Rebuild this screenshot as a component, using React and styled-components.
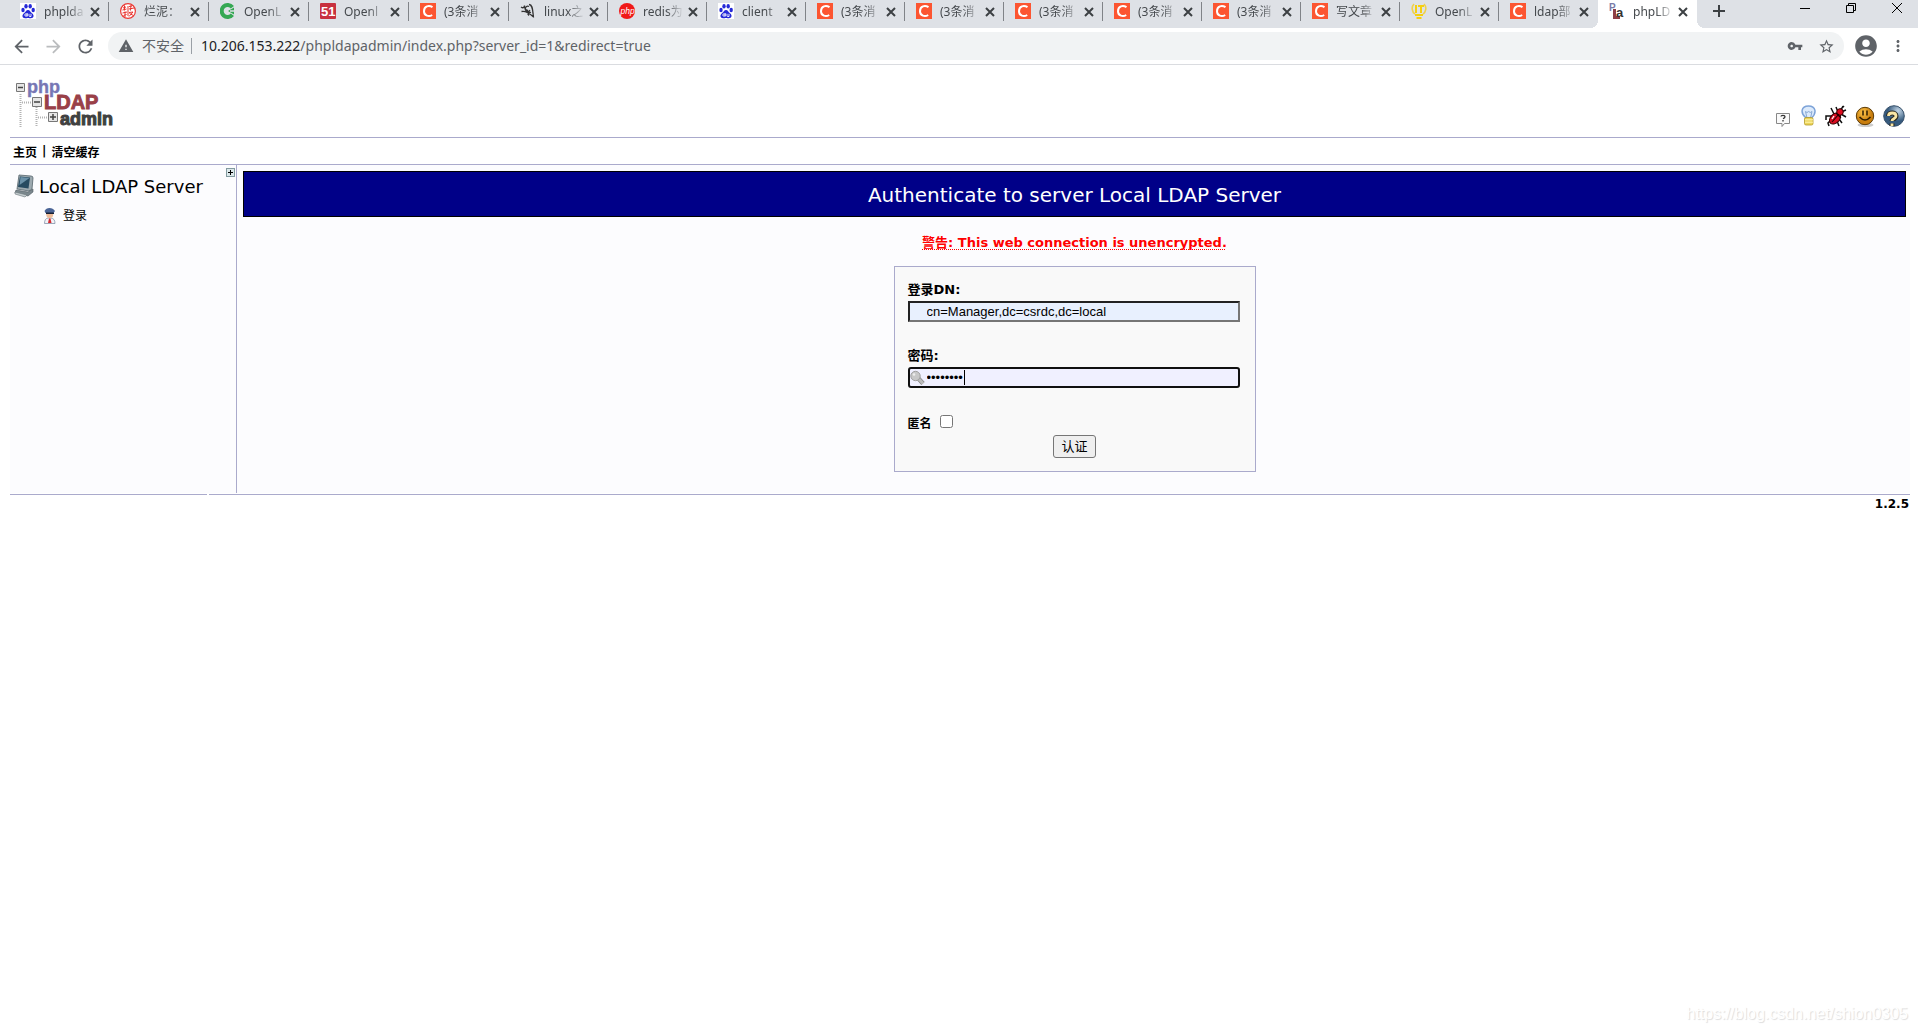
import React from "react";
import styled, { createGlobalStyle } from "styled-components";
import { MdArrowBack, MdArrowForward, MdRefresh, MdWarning, MdVpnKey, MdStarBorder, MdAccountCircle, MdMoreVert } from "react-icons/md";

const line = "#aaaacc";
const pageFont = '"DejaVu Sans", "Noto Sans CJK SC", sans-serif';
const chromeFont = '"Noto Sans", "Noto Sans CJK SC", sans-serif';

const Global = createGlobalStyle`
  *, *::before, *::after { box-sizing: border-box; }
  body { margin: 0; background: #fff; }
  button { font: inherit; color: inherit; padding: 0; border: 0; background: none; }
  svg { display: block; flex: none; }
`;

const Screen = styled.div`
  display: flex;
  flex-direction: column;
  min-height: 100vh;
  font-family: ${pageFont};
  font-size: 12px;
  color: #000;
`;

/* ---------- browser frame ---------- */
const TabStrip = styled.div`
  display: flex;
  height: 28px;
  padding-left: 9px;
  background: #dee1e6;
  font: 12px/18px ${chromeFont};
  color: #45494d;
  overflow: hidden;
`;
const Tabs = styled.div`
  display: flex;
  flex: 0 1 1688px;
  min-width: 0;
`;
const Tab = styled.div`
  display: flex;
  align-items: flex-start;
  flex: 0 1 ${(p) => (p.$wide ? 100 : 99)}px;
  min-width: 0;
  height: 28px;
  padding: 3px 9px 0 11px;
  background: ${(p) => (p.$active ? "#fff" : "none")};
  position: relative;
  &::after {
    content: "";
    position: absolute;
    right: 0;
    top: 2px;
    width: 1px;
    height: 19px;
    background: ${(p) => (p.$bare ? "transparent" : "#808388")};
  }
  ${(p) =>
    p.$active &&
    `&::before { content: ""; position: absolute; left: -8px; bottom: 0; width: 8px; height: 8px;
      background: radial-gradient(circle at 0 0, #dee1e6 8px, #fff 8px); }
     &::after { top: auto; bottom: 0; right: -8px; width: 8px; height: 8px;
      background: radial-gradient(circle at 100% 0, #dee1e6 8px, #fff 8px); }`}
`;
const TabTitle = styled.span`
  flex: 1 1 0;
  min-width: 0;
  margin-left: 8px;
  overflow: hidden;
  white-space: nowrap;
  mask-image: linear-gradient(to right, #000 60%, rgba(0, 0, 0, 0.1) 100%);
`;
const TabClose = styled.button`
  margin: 4px 0 0 6px;
`;
const NewTab = styled.button`
  margin: 0 0 6px 16px;
`;
const WindowButtons = styled.div`
  display: flex;
  gap: 36px;
  margin: 3px 16px 0 auto;
`;
const WindowButton = styled.button`
  width: 10px;
  height: 10px;
`;
const Toolbar = styled.div`
  display: flex;
  align-items: center;
  height: 37px;
  padding: 0 11px 0 11px;
  border-bottom: 1px solid #dadce0;
  color: #5f6368;
  font: 14px/20px ${chromeFont};
`;
const ToolButton = styled.button`
  margin-right: ${(p) => p.$after}px;
  color: ${(p) => (p.$faded ? "#babcbe" : "#5f6368")};
  font-size: ${(p) => p.$size || 21}px;
`;
const AddressBar = styled.div`
  display: flex;
  align-items: center;
  flex: 1;
  min-width: 0;
  height: 28px;
  margin-right: 9px;
  padding: 0 9px 0 10px;
  border-radius: 14px;
  background: #f1f3f4;
  font-size: 16px;
`;
const Insecure = styled.span`
  margin-left: 8px;
  padding-right: 7px;
  border-right: 1px solid #9aa0a6;
  font-size: 14px;
  line-height: 16px;
`;
const Url = styled.div`
  flex: 1;
  margin-left: 9px;
  font-size: 14px;
  white-space: nowrap;
  b { font-weight: 400; color: #202124; }
`;

/* ---------- application ---------- */
const Page = styled.div`
  padding: 0 8px 0 10px;
`;
const Header = styled.header`
  display: flex;
  justify-content: space-between;
  align-items: flex-end;
  height: 73px;
  padding: 0 5px 9px 4px;
  border-bottom: 1px solid ${line};
`;
const Tools = styled.nav`
  display: flex;
  align-items: flex-end;
  gap: 8px;
  a { display: block; }
`;
const Menu = styled.nav`
  display: flex;
  align-items: center;
  gap: 5px;
  height: 27px;
  padding-left: 3px;
  border-bottom: 1px solid ${line};
  font-weight: 700;
  a { color: inherit; text-decoration: none; }
`;
const Columns = styled.div`
  display: flex;
  min-height: 328px;
  background: #fcfcfe;
`;
const Sidebar = styled.aside`
  display: flex;
  align-items: flex-start;
  flex: none;
  width: 227px;
  padding: 3px 1px 0 4px;
  border-right: 1px solid ${line};
`;
const Tree = styled.div`
  flex: 1;
  padding-top: 5px;
`;
const ServerName = styled.div`
  display: flex;
  align-items: center;
  gap: 5px;
  height: 26px;
  font-size: 18px;
  white-space: nowrap;
`;
const LoginLink = styled.a`
  display: flex;
  align-items: center;
  gap: 6px;
  margin-top: 8px;
  padding-left: 29px;
  line-height: 18px;
  color: #000;
  text-decoration: none;
`;
const Expand = styled.button`
  width: 9px;
  height: 9px;
`;
const Main = styled.main`
  display: flex;
  flex-direction: column;
  align-items: center;
  flex: 1;
  min-width: 0;
  padding: 6px 4px 21px 6px;
`;
const Title = styled.h1`
  width: 100%;
  margin: 0;
  padding: 11px 10px 9px;
  border: 1px solid #000;
  background: #000088;
  color: #fff;
  font-size: 20px;
  font-weight: 400;
  line-height: 24px;
  text-align: center;
`;
const Warning = styled.strong`
  margin: 17px 0 15px;
  font-size: 13px;
  line-height: 17px;
  color: #f00;
  text-decoration: underline dotted 1px;
  text-underline-offset: 2px;
  text-decoration-skip-ink: none;
`;
const Form = styled.form`
  width: 362px;
  padding: 13px 15px 13px 13px;
  border: 1px solid ${line};
  background: #f9f9f9;
`;
const Label = styled.label`
  display: block;
  font-size: ${(p) => p.$size || 13}px;
  font-weight: 700;
  line-height: 20px;
`;
const Field = styled.div`
  position: relative;
  margin: 1px 0 24px;
`;
const Input = styled.input`
  display: block;
  width: 100%;
  height: 21px;
  padding: 0 0 0 17px;
  border: 2px solid;
  border-color: #222 #767676 #767676 #222;
  outline: 0;
  background: #e8f0fe;
  font: 13px "Liberation Sans", Arial, sans-serif;
  color: #000;
  ${(p) => p.$focused && "border-color: #101010; border-radius: 3px; background: #f0f0ff; caret-color: transparent;"}
`;
const KeyMark = styled.span`
  position: absolute;
  left: 2px;
  top: 3px;
`;
const Caret = styled.span`
  position: absolute;
  left: 56px;
  top: 3px;
  width: 1px;
  height: 15px;
  background: #000;
`;
const CheckRow = styled.div`
  display: flex;
  align-items: flex-end;
  gap: 8px;
  height: 22px;
  input { margin: 0 0 6px; width: 13px; height: 13px; }
`;
const Submit = styled.button`
  && {
    display: block;
    width: 43px;
    height: 23px;
    margin: 1px auto 0;
    border: 1px solid #767676;
    border-radius: 3px;
    background: #efefef;
    font: 13px/19px ${chromeFont};
  }
`;
const SubmitRow = styled.div`
  padding-left: 2px;
`;
const Footer = styled.footer`
  display: flex;
  gap: 2px;
  margin-top: 1px;
  font-weight: 700;
  line-height: 18px;
`;
const FooterCell = styled.div`
  flex: ${(p) => (p.$fixed ? "0 0 197px" : "1")};
  padding-right: 1px;
  border-top: 1px solid ${line};
  text-align: right;
`;
const Watermark = styled.div`
  margin: auto 10px 8px;
  text-align: right;
  font: 16px/20px "Liberation Sans", Arial, sans-serif;
  color: #fff;
  text-shadow: 1px 1px 1px #dcdcdc;
`;

/* ---------- drawings ---------- */
const Fav = ({ children }) => (
  <svg width="16" height="16" viewBox="0 0 16 16" aria-hidden="true">{children}</svg>
);
const sans = '"Liberation Sans", Arial, sans-serif';
const favicons = {
  baidu: (
    <Fav>
      <rect width="16" height="16" fill="#fff" />
      <g fill="#2529d8">
        <ellipse cx="3" cy="7" rx="1.7" ry="2.2" /><ellipse cx="6" cy="3.3" rx="1.7" ry="2.2" />
        <ellipse cx="10.2" cy="3.3" rx="1.7" ry="2.2" /><ellipse cx="13.2" cy="7" rx="1.7" ry="2.2" />
        <path d="M8 7c2 0 2.3 2 4 3.2 2.8 2 1.5 5-1 5-1.300 0-1.800-.3-3-.3s-1.700.3-3 .3c-2.500 0-3.700-3-1-5C5.700 9 6 7 8 7z" />
      </g>
      <g stroke="#fff" fill="none" strokeWidth=".9"><circle cx="6" cy="12" r="1.2" /><path d="M7.200 10v3.500M9 10.800v2q0 .7 1 .7h1v-2.700" /></g>
    </Fav>
  ),
  seal: (
    <Fav>
      <circle cx="8" cy="8" r="7.400" fill="#fff" stroke="#ea3a35" strokeWidth="1.200" />
      <g stroke="#e8322d" strokeWidth="1" fill="none"><path d="M3 5l3-1M4.500 2.500v5M2.500 7l4-1M9 3.500l3-.5M9 6l5-1M11 2l-.5 5.500M2.500 10L7 9M3.500 12.500l3-1M5 8.500v5.500M9 9.500l4-.5-4 4.500M9.500 10.500l4 2M8 3v10" /></g>
    </Fav>
  ),
  green: (
    <Fav>
      <path d="M12.900 4.300A6 6 0 1 0 12.900 11.700" transform="translate(-.5 0)" fill="none" stroke="#35a853" strokeWidth="4" />
      <path d="M8 8l6-3.500v2.700H10v1.600h4v2.700z" fill="#35a853" />
    </Fav>
  ),
  fiftyOne: (
    <Fav>
      <rect width="16" height="16" rx="1" fill="#c8313f" />
      <text x="1" y="13" fontFamily={sans} fontWeight="700" fontSize="13" fill="#fff">51</text>
    </Fav>
  ),
  csdn: (
    <Fav>
      <rect width="16" height="16" fill="#fc5531" />
      <path d="M12.500 4.200C9 2 4 3 4 8.200c0 4.800 5 5.800 8.200 3.800" fill="none" stroke="#fff" strokeWidth="2" />
    </Fav>
  ),
  linux: (
    <Fav>
      <path d="M1 4q3 2 3.500-1.500Q4.500 7 8 7.500M9 3.500a2.500 2.500 0 1 0 1 3.500M9 1.500c4 0 3.500 6 4.500 13M1.500 8.500c4-1 7 1 11.500 5M11 9.500c-3-1-4 1.500-2 3" fill="none" stroke="#333" strokeWidth="1.300" />
    </Fav>
  ),
  php: (
    <Fav>
      <circle cx="8" cy="8" r="8" fill="#f01818" />
      <text x="1.500" y="10.500" fontFamily={sans} fontStyle="italic" fontSize="8.500" fill="#fff">php</text>
    </Fav>
  ),
  it: (
    <Fav>
      <path d="M3 1C0 4 1 9 4 11M13 1c3 3 2 8-1 10" fill="none" stroke="#efd14a" strokeWidth="1.600" />
      <path d="M4 2h2v8H4zM7 2h6v2h-2v6H9V4H7zM4 11h8v2H4zM5.500 14h5v2h-5z" fill="#f5cf10" />
    </Fav>
  ),
  pla: (
    <Fav>
      <text x="0" y="8" fontFamily={sans} fontWeight="700" fontSize="10" fill="#7b7ba8">P</text>
      <path d="M4 6h3v7h4v3H4z" fill="#8c3f48" />
      <text x="7" y="14" fontFamily={sans} fontWeight="700" fontSize="13" fill="#333">a</text>
    </Fav>
  ),
};

const Logo = () => (
  <svg width="102" height="50" viewBox="14 79 102 50" role="img" aria-label="phpLDAPadmin">
    <g stroke="#b4b4b4" strokeWidth="2" strokeDasharray="1 1" fill="none">
      <path d="M20.500 95v33M36.500 108v20M22 103.500h10M38 118.500h10" />
    </g>
    <g fontFamily={sans} fontWeight="700">
      <text x="27" y="94" fontSize="18" fill="#7777b5" stroke="#7777b5" strokeWidth=".4">php</text>
      <text x="44" y="110" fontSize="20" fill="#994048" stroke="#994048" strokeWidth=".9">LDAP</text>
      <text x="60" y="126" fontSize="18" fill="#404040" stroke="#404040" strokeWidth="1">admin</text>
    </g>
    <g fill="#e6e6e6" stroke="#777">
      <path d="M16.500 84.500h8v8h-8zM32.500 98.500h9v9h-9zM48.500 113.500h9v9h-9z" />
      <path d="M18 88.500h5M34 103h6M50 118h6M53 115v6" stroke="#444" strokeWidth="1.500" />
    </g>
  </svg>
);
const Bubble = () => (
  <svg width="18" height="18" viewBox="0 0 18 18">
    <path d="M1.500 3.500h13v10h-5L7 16.500v-3H1.500z" fill="#fafafa" stroke="#888" />
    <path d="M6 6.500Q6 5.300 8 5.300t2 1.400Q10 7.800 8 8.700M8 10v1.500" fill="none" stroke="#333" strokeWidth="1.300" />
  </svg>
);
const Bulb = () => (
  <svg width="16" height="23" viewBox="0 0 16 23">
    <path d="M5 13C-1 8 0 1 7.500 1S16 8 10.500 13z" fill="#dceafb" stroke="#7da3d8" strokeWidth="1.500" />
    <path d="M6 13L4.500 6.500l1.500 1 1.700-1 1.600 1 1.700-1L9.500 13" fill="none" stroke="#87a8d4" />
    <rect x="3.500" y="12.500" width="8.500" height="7.500" rx="1.500" fill="#ecd45a" stroke="#b49a28" strokeWidth=".8" /><path d="M4 14.800h8M4 17.200h8" stroke="#fff6b0" />
  </svg>
);
const Bug = () => (
  <svg width="22" height="24" viewBox="1 0 22 24">
    <path d="M9 12H2v4M10 10L7 4M14 8l-2-5M15 7l5-5M17 8l5-2M17 10l5 3M15 15l3 4M13 17l2 5M8 15l-4 4 1 3M17 6l2-4" fill="none" stroke="#111" strokeWidth="1.500" />
    <ellipse cx="11" cy="14.500" rx="6.500" ry="4.500" transform="rotate(-45 11 14.500)" fill="#d80c20" stroke="#300" />
    <circle cx="16" cy="8" r="3.300" fill="#e00b20" stroke="#300" />
    <path d="M12 9l5 5M8 18l7-8" stroke="#200" strokeWidth="1.100" /><path d="M8 15l2-3" stroke="#fff" strokeWidth="1.300" />
  </svg>
);
const Smiley = () => (
  <svg width="20" height="22" viewBox="0 0 20 22">
    <defs><radialGradient id="face" cx=".4" cy=".3"><stop offset="0" stopColor="#ffc64a" /><stop offset="1" stopColor="#c97e0e" /></radialGradient></defs>
    <ellipse cx="10.500" cy="19" rx="8" ry="2" fill="#ccc" />
    <circle cx="10" cy="10" r="8.700" fill="url(#face)" stroke="#5c3b06" />
    <path d="M8 4.500v5M12 4.500v5M4.500 11q5.500 6 11 0" fill="none" stroke="#2e1d00" strokeWidth="1.500" />
  </svg>
);
const Help = () => (
  <svg width="22" height="23" viewBox="0 0 22 23">
    <defs><radialGradient id="globe" cx=".7" cy=".25"><stop offset="0" stopColor="#c5d8e8" /><stop offset="1" stopColor="#365a7d" /></radialGradient></defs>
    <circle cx="11" cy="11" r="10.300" fill="url(#globe)" stroke="#38516b" />
    <path d="M5.500 11C5.500 7 13 7 13 11c0 3-4 2.500-4 5M9 18.500v2.500" fill="none" stroke="#2b2920" strokeWidth="5" />
    <path d="M5.500 11C5.500 7 13 7 13 11c0 3-4 2.500-4 5M9 18.500v2.500" fill="none" stroke="#fae6a5" strokeWidth="2.800" />
  </svg>
);
const Computer = () => (
  <svg width="20" height="24" viewBox="0 0 20 24">
    <path d="M5 1l12 1q2 0 2 2l-1 11-3 2-12-2z" fill="#9ca9af" stroke="#56656c" strokeWidth=".8" />
    <path d="M6 2.500l10 1-1.500 11-10.500-1.500z" fill="#264a60" /><path d="M6.500 3l9 1-10 7z" fill="#6b91a8" />
    <path d="M2 16l12 2 5-3v3l-5 4L1 19z" fill="#7b888e" stroke="#4c585e" strokeWidth=".6" />
    <path d="M1 18l12 3-2 2-10-3z" fill="#c5cdd0" stroke="#687379" strokeWidth=".6" />
  </svg>
);
const Person = () => (
  <svg width="14" height="16" viewBox="0 0 14 16">
    <path d="M1.500 15.500q0-5 3.500-5.500h3q4 .5 4 5.500z" fill="#f1f3f8" stroke="#8593a9" strokeWidth=".8" />
    <circle cx="6.700" cy="6.500" r="3.500" fill="#edbd9b" /><path d="M1.500 3Q3 0 6.500 0T12 3l-1.500 2h-8z" fill="#4a6496" /><path d="M3 4.500h8V6H3z" fill="#172034" />
    <path d="M6 10.500h1.500l1 4.500H5z" fill="#d52b30" />
  </svg>
);
const Key = () => (
  <svg width="16" height="16" viewBox="0 0 16 16">
    <path d="M8 8l5 5.500" stroke="#888" strokeWidth="4.500" /><path d="M8 8l5 5.500" stroke="#bcbcbc" strokeWidth="3" />
    <circle cx="5.500" cy="6" r="4.700" fill="#c8c8c8" stroke="#a0a0a0" /><circle cx="4" cy="4.500" r="1.300" fill="#eee" />
  </svg>
);

const tabs = [
  ["baidu", "phplda"], ["seal", "烂泥："], ["green", "OpenL"], ["fiftyOne", "Openl"],
  ["csdn", "(3条消"], ["linux", "linux之"], ["php", "redis为"], ["baidu", "client"],
  ["csdn", "(3条消"], ["csdn", "(3条消"], ["csdn", "(3条消"], ["csdn", "(3条消"], ["csdn", "(3条消"],
  ["csdn", "写文章"], ["it", "OpenL"], ["csdn", "ldap部"], ["pla", "phpLD"],
];
const tools = [["提示", Bubble], ["建议", Bulb], ["报告错误", Bug], ["捐赠", Smiley], ["帮助", Help]];

export default function App() {
  return (
    <Screen>
      <Global />
      <TabStrip>
        <Tabs>
          {tabs.map(([icon, title], i) => (
            <Tab key={i} $wide={i < 5} $active={i === 16} $bare={i >= 15}>
              {favicons[icon]}
              <TabTitle>{title}</TabTitle>
              <TabClose aria-label="关闭">
                <svg width="10" height="10" stroke="#3c4043" strokeWidth="2"><path d="M1 1l8 8M9 1L1 9" /></svg>
              </TabClose>
            </Tab>
          ))}
        </Tabs>
        <NewTab aria-label="新标签页">
          <svg width="12" height="12" stroke="#3c4043" strokeWidth="2"><path d="M6 0v12M0 6h12" /></svg>
        </NewTab>
        <WindowButtons>
          <WindowButton aria-label="最小化"><svg width="10" height="10"><path d="M0 5.500h10" stroke="#000" /></svg></WindowButton>
          <WindowButton aria-label="还原"><svg width="10" height="10" fill="none" stroke="#000"><path d="M.5 2.500h7v7h-7zM2.500 2.500v-2h7v7h-2" /></svg></WindowButton>
          <WindowButton aria-label="关闭窗口"><svg width="10" height="10" stroke="#000"><path d="M0 0l10 10M10 0L0 10" /></svg></WindowButton>
        </WindowButtons>
      </TabStrip>
      <Toolbar>
        <ToolButton $after={11} aria-label="后退"><MdArrowBack /></ToolButton>
        <ToolButton $after={11} $faded aria-label="前进"><MdArrowForward /></ToolButton>
        <ToolButton $after={12} aria-label="刷新"><MdRefresh /></ToolButton>
        <AddressBar>
          <MdWarning />
          <Insecure>不安全</Insecure>
          <Url><b>10.206.153.222</b>/phpldapadmin/index.php?server_id=1&amp;redirect=true</Url>
          <ToolButton $after={15} $size={16} aria-label="密码"><MdVpnKey /></ToolButton>
          <ToolButton $after={0} $size={17} aria-label="收藏"><MdStarBorder /></ToolButton>
        </AddressBar>
        <ToolButton $after={10} $size={26} aria-label="用户"><MdAccountCircle /></ToolButton>
        <ToolButton $after={0} $size={18} aria-label="菜单"><MdMoreVert /></ToolButton>
      </Toolbar>

      <Page>
        <Header>
          <Logo />
          <Tools>
            {tools.map(([name, Icon]) => (
              <a key={name} href="#" aria-label={name}><Icon /></a>
            ))}
          </Tools>
        </Header>
        <Menu>
          <a href="#">主页</a>
          <span>|</span>
          <a href="#">清空缓存</a>
        </Menu>
        <Columns>
          <Sidebar>
            <Tree>
              <ServerName><Computer />Local LDAP Server</ServerName>
              <LoginLink href="#"><Person />登录</LoginLink>
            </Tree>
            <Expand aria-label="展开">
              <svg width="9" height="9"><rect x=".5" y=".5" width="8" height="8" fill="#dce8ea" stroke="#829a9f" /><path d="M2 4.500h5M4.500 2v5" stroke="#000" /></svg>
            </Expand>
          </Sidebar>
          <Main>
            <Title>Authenticate to server Local LDAP Server</Title>
            <Warning>警告: This web connection is unencrypted.</Warning>
            <Form onSubmit={(e) => e.preventDefault()}>
              <Label htmlFor="dn">登录DN:</Label>
              <Field>
                <Input id="dn" defaultValue="cn=Manager,dc=csrdc,dc=local" />
              </Field>
              <Label htmlFor="password">密码:</Label>
              <Field>
                <Input id="password" type="password" defaultValue="12345678" $focused />
                <KeyMark><Key /></KeyMark>
                <Caret />
              </Field>
              <CheckRow>
                <Label htmlFor="anonymous" $size={12}>匿名</Label>
                <input id="anonymous" type="checkbox" />
              </CheckRow>
              <SubmitRow><Submit type="submit">认证</Submit></SubmitRow>
            </Form>
          </Main>
        </Columns>
        <Footer>
          <FooterCell $fixed />
          <FooterCell>1.2.5</FooterCell>
        </Footer>
      </Page>
      <Watermark>https://blog.csdn.net/shion0305</Watermark>
    </Screen>
  );
}
